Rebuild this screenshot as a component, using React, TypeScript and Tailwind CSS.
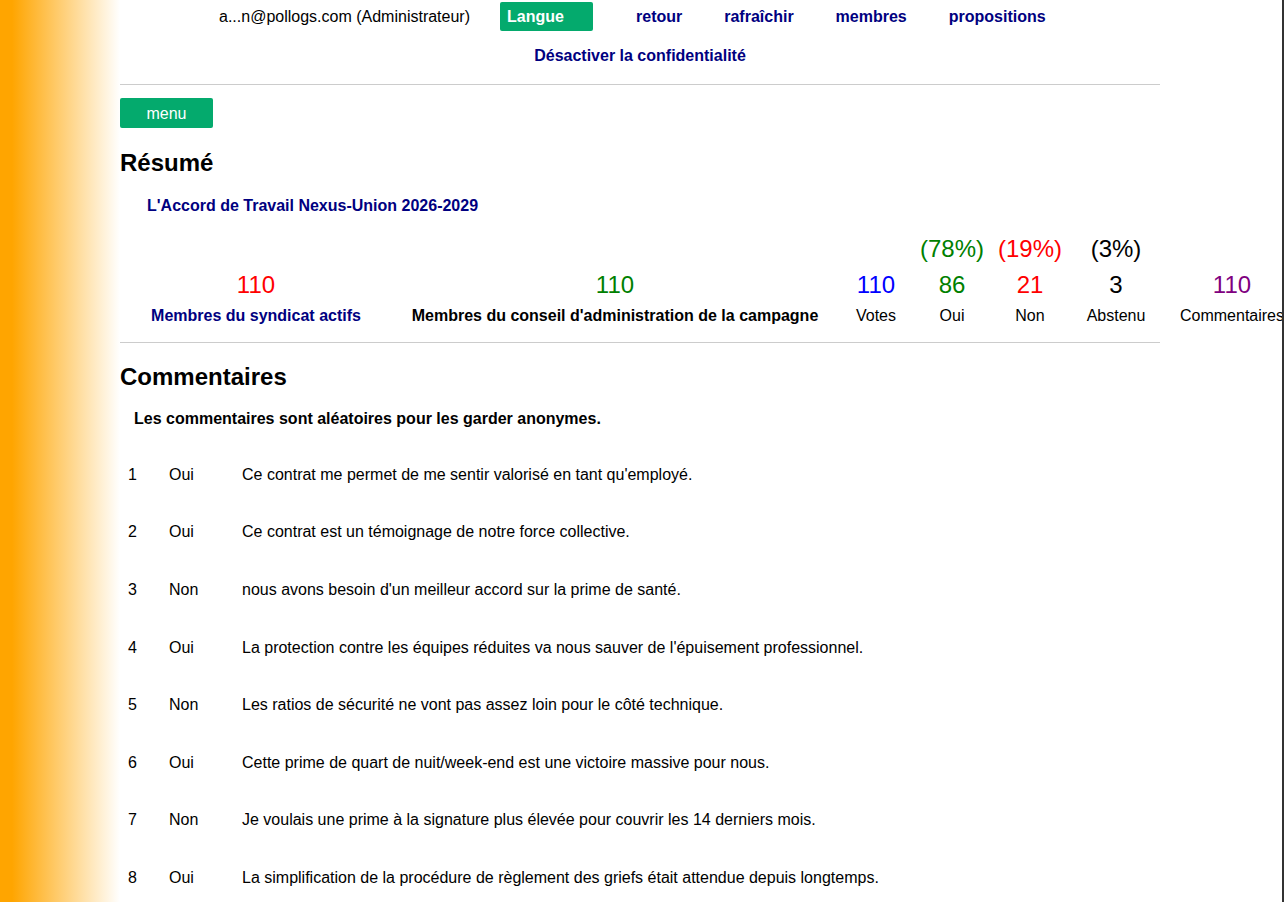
import React from 'react';

const navLinks = ['retour', 'rafraîchir', 'membres', 'propositions'];

const comments: { vote: string; text: string }[] = [
  { vote: 'Oui', text: "Ce contrat me permet de me sentir valorisé en tant qu'employé." },
  { vote: 'Oui', text: 'Ce contrat est un témoignage de notre force collective.' },
  { vote: 'Non', text: "nous avons besoin d'un meilleur accord sur la prime de santé." },
  { vote: 'Oui', text: "La protection contre les équipes réduites va nous sauver de l'épuisement professionnel." },
  { vote: 'Non', text: 'Les ratios de sécurité ne vont pas assez loin pour le côté technique.' },
  { vote: 'Oui', text: 'Cette prime de quart de nuit/week-end est une victoire massive pour nous.' },
  { vote: 'Non', text: 'Je voulais une prime à la signature plus élevée pour couvrir les 14 derniers mois.' },
  { vote: 'Oui', text: 'La simplification de la procédure de règlement des griefs était attendue depuis longtemps.' },
];

// stats columns: width + centred content
const stats = [
  { w: 'w-[272px]', pct: '', pctColor: '', num: '110', numColor: 'text-[#ff0000]', label: 'Membres du syndicat actifs', labelCls: 'font-bold text-[#000080]' },
  { w: 'w-[446px]', pct: '', pctColor: '', num: '110', numColor: 'text-[#008000]', label: "Membres du conseil d'administration de la campagne", labelCls: 'font-bold text-black' },
  { w: 'w-[76px]', pct: '', pctColor: '', num: '110', numColor: 'text-[#0000ff]', label: 'Votes', labelCls: 'text-black' },
  { w: 'w-[76px]', pct: '(78%)', pctColor: 'text-[#008000]', num: '86', numColor: 'text-[#008000]', label: 'Oui', labelCls: 'text-black' },
  { w: 'w-[80px]', pct: '(19%)', pctColor: 'text-[#ff0000]', num: '21', numColor: 'text-[#ff0000]', label: 'Non', labelCls: 'text-black' },
  { w: 'w-[92px]', pct: '(3%)', pctColor: 'text-black', num: '3', numColor: 'text-black', label: 'Abstenu', labelCls: 'text-black' },
  { w: 'w-[140px]', pct: '', pctColor: '', num: '110', numColor: 'text-[#800080]', label: 'Commentaires', labelCls: 'text-black' },
];

export default function App() {
  return (
    <div className="min-h-screen w-full overflow-hidden border-r-2 border-[#333] bg-white bg-[linear-gradient(to_right,#ffa500_12px,#ffffff_120px)] bg-no-repeat bg-[length:120px_100%] font-['Liberation_Sans',Arial,sans-serif] text-[16px] text-black">
      <div className="pl-[120px]">
        <div className="w-[1040px]">
          {/* top nav */}
          <div className="flex items-center pt-[2px] pl-[99px] leading-[18px]">
            <span>a...n@pollogs.com (Administrateur)</span>
            <button className="ml-[30px] h-[29px] w-[93px] rounded-[2px] bg-[#04aa6d] pl-[7px] text-left font-bold text-white">
              Langue
            </button>
            <div className="ml-[43px] flex gap-[42px]">
              {navLinks.map(l => (
                <a key={l} className="cursor-pointer font-bold text-[#000080]">{l}</a>
              ))}
            </div>
          </div>
          <div className="mt-[16px] text-center font-bold leading-[18px] text-[#000080]">
            Désactiver la confidentialité
          </div>
          <hr className="mt-[19px] border-t border-[#cccccc]" />

          <button className="mt-[13px] h-[30px] w-[93px] rounded-[2px] bg-[#04aa6d] pt-[1px] text-white">menu</button>

          <h2 className="mt-[21px] text-[24px] font-bold leading-[28px]">Résumé</h2>
          <div className="mt-[20px] pl-[27px] font-bold leading-[18px] text-[#000080]">
            L'Accord de Travail Nexus-Union 2026-2029
          </div>

          {/* stats */}
          <div className="mt-[20px] flex">
            {stats.map((s, i) => (
              <div key={i} className={`${s.w} shrink-0 text-center`}>
                <div className={`h-[28px] text-[24px] leading-[28px] ${s.pctColor}`}>{s.pct}</div>
                <div className={`mt-[8px] text-[24px] leading-[28px] ${s.numColor}`}>{s.num}</div>
                <div className={`mt-[8px] whitespace-nowrap leading-[18px] ${s.labelCls}`}>{s.label}</div>
              </div>
            ))}
          </div>
          <hr className="mt-[17px] border-t border-[#cccccc]" />

          <h2 className="mt-[20px] text-[24px] font-bold leading-[28px]">Commentaires</h2>
          <div className="mt-[19px] pl-[14px] font-bold leading-[18px]">
            Les commentaires sont aléatoires pour les garder anonymes.
          </div>

          <div className="mt-[18px]">
            {comments.map((c, i) => (
              <div key={i} className="flex h-[57.6px] items-center leading-[18px]">
                <span className="w-[49px] pl-[8px]">{i + 1}</span>
                <span className="w-[73px]">{c.vote}</span>
                <span>{c.text}</span>
              </div>
            ))}
          </div>
        </div>
      </div>
    </div>
  );
}
